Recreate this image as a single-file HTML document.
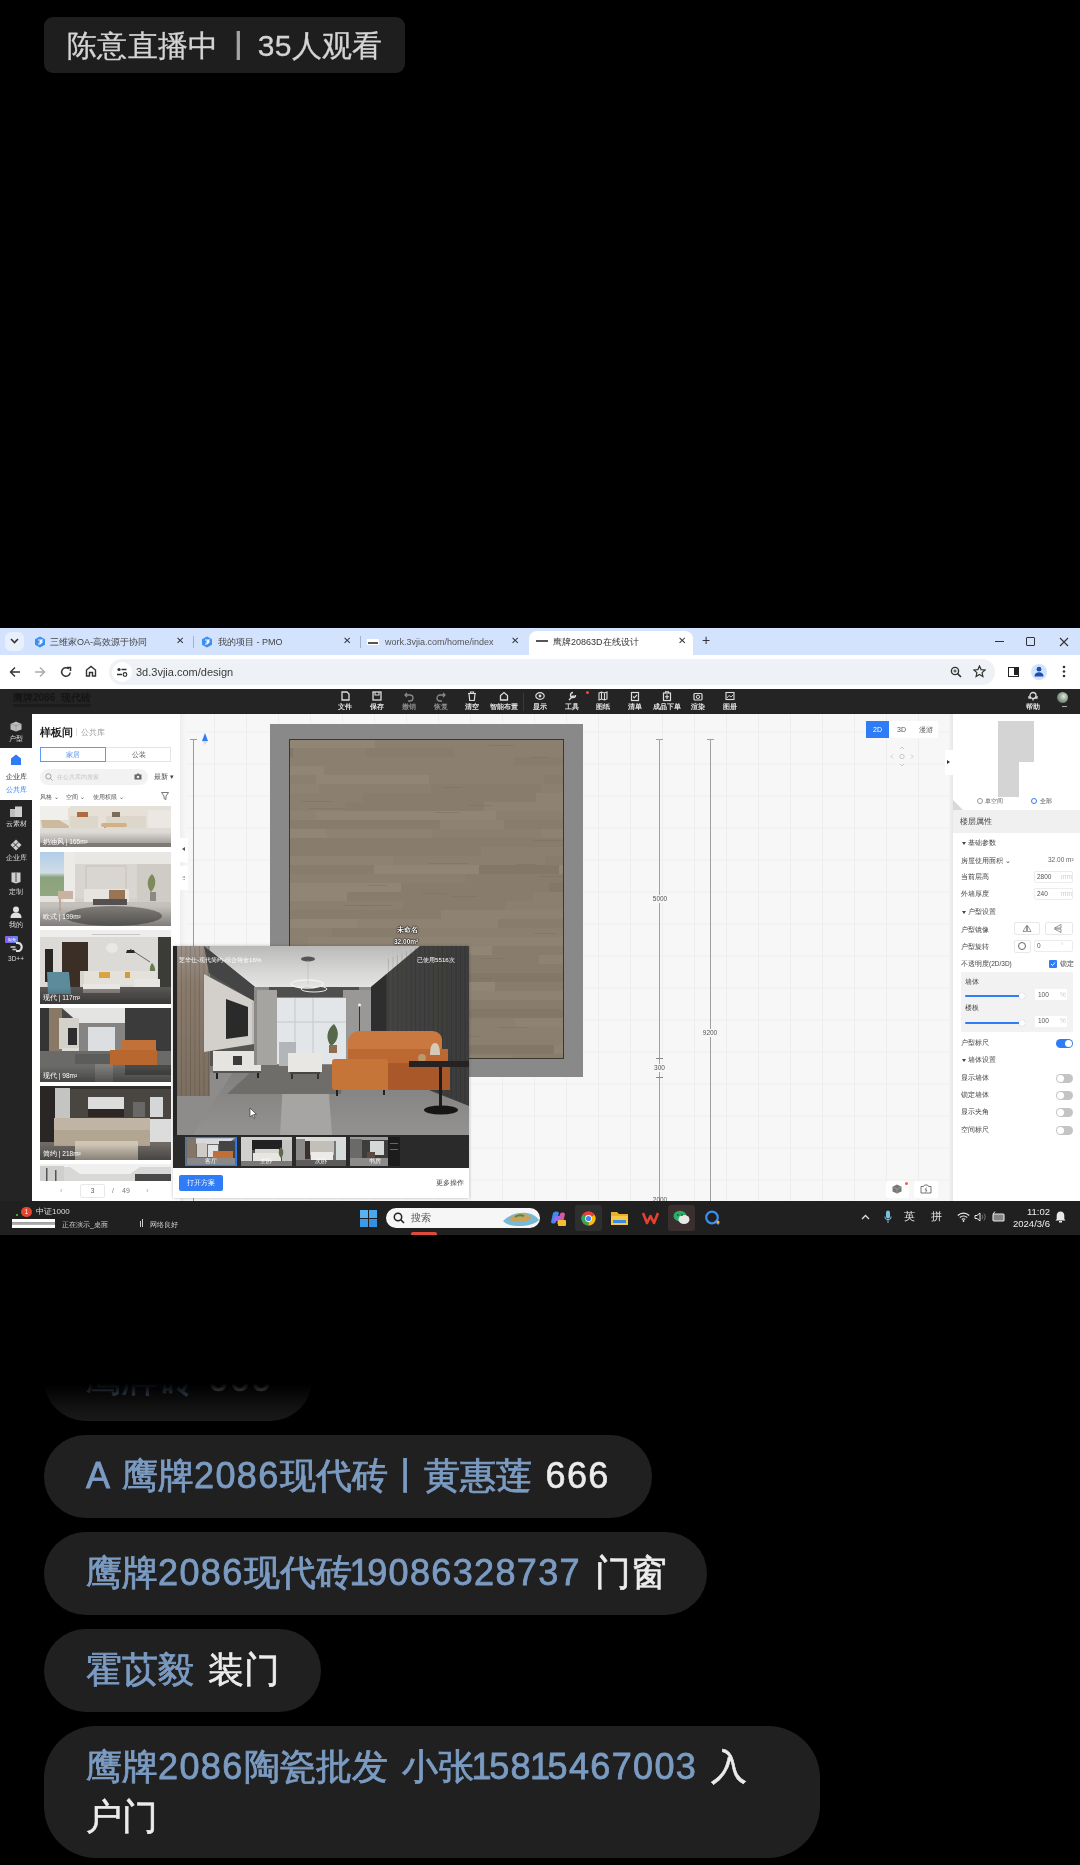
<!DOCTYPE html>
<html><head><meta charset="utf-8">
<style>
*{margin:0;padding:0;box-sizing:border-box}
html,body{width:1080px;height:1865px;background:#000;overflow:hidden;font-family:"Liberation Sans",sans-serif}
.a{position:absolute}
.pill{will-change:transform;left:44px;top:17px;width:361px;height:56px;border-radius:9px;background:#1e1e1e;color:#d4d4d4;font-size:30px;line-height:58px;-webkit-text-stroke:0.3px #d4d4d4;letter-spacing:0.3px;padding-left:23px;white-space:nowrap}
.bub{will-change:transform;position:absolute;left:44px;background:#202020;border-radius:42px;font-size:36px;line-height:50px;white-space:nowrap;padding-left:42px;word-spacing:4px}
.nm{color:#7b9bc2;-webkit-text-stroke:0.8px #7b9bc2}
.ct{color:#ececec;-webkit-text-stroke:0.6px #ececec}
.bub i{font-style:normal;letter-spacing:1.35px}
.bub i.o{letter-spacing:-2.4px;margin-left:-2px}
#shot{left:0;top:0;width:1080px;height:1865px;will-change:transform}
.t9{font-size:9px;line-height:12px;white-space:nowrap}
.x9{font-size:10px;line-height:12px;color:#333}
.tb{position:absolute;top:690px;width:30px;text-align:center;color:#eee;font-size:6.5px;line-height:8px;white-space:nowrap;font-weight:bold}
.tb svg{display:block;margin:1px auto 1px}
.rp{font-size:6.5px;line-height:8px;color:#444;white-space:nowrap}
.rl{left:0;width:32px;text-align:center;font-size:6.5px;line-height:8px;white-space:nowrap}
</style></head>
<body>
<div class="a pill">陈意直播中<span style="color:#a8a8a8;margin:0 4px 0 5px;-webkit-text-stroke:0.8px #a8a8a8">丨</span>35人观看</div>

<div id="shot" class="a">
<!-- ===== browser chrome ===== -->
<div class="a" style="left:0;top:628px;width:1080px;height:27px;background:#d3e3fd"></div>
<div class="a" style="left:5px;top:632px;width:19px;height:19px;border-radius:6px;background:#e9f0fb"></div>
<svg class="a" style="left:10px;top:638px" width="9" height="6" viewBox="0 0 9 6"><path d="M1 1l3.5 3.5L8 1" stroke="#333" stroke-width="1.6" fill="none"/></svg>
<!-- tab1 -->
<svg class="a" style="left:34px;top:636px" width="12" height="12" viewBox="0 0 12 12"><path d="M6 0.5l5 2.8v5.4L6 11.5 1 8.7V3.3z" fill="#3c8ef0"/><path d="M4 4h4l-2 2h2l-2 2H4" stroke="#fff" stroke-width="1.2" fill="none"/></svg>
<div class="a t9" style="left:50px;top:636px;color:#444">三维家OA-高效源于协同</div>
<div class="a x9" style="left:176px;top:635px">✕</div>
<div class="a" style="left:193px;top:636px;width:1px;height:12px;background:#9fb2cf"></div>
<!-- tab2 -->
<svg class="a" style="left:201px;top:636px" width="12" height="12" viewBox="0 0 12 12"><path d="M6 0.5l5 2.8v5.4L6 11.5 1 8.7V3.3z" fill="#3c8ef0"/><path d="M4 4h4l-2 2h2l-2 2H4" stroke="#fff" stroke-width="1.2" fill="none"/></svg>
<div class="a t9" style="left:218px;top:636px;color:#444">我的项目 - PMO</div>
<div class="a x9" style="left:343px;top:635px">✕</div>
<div class="a" style="left:360px;top:636px;width:1px;height:12px;background:#9fb2cf"></div>
<!-- tab3 -->
<div class="a" style="left:367px;top:639px;width:12px;height:6px;background:#fff;border-top:2px solid #fff"><div style="margin:1px 1px;height:2px;background:#555"></div></div>
<div class="a t9" style="left:385px;top:636px;color:#555">work.3vjia.com/home/index</div>
<div class="a x9" style="left:511px;top:635px">✕</div>
<!-- active tab -->
<div class="a" style="left:529px;top:631px;width:164px;height:26px;background:#fff;border-radius:8px 8px 0 0"></div>
<div class="a" style="left:536px;top:640px;width:12px;height:4px"><div style="height:2px;background:#555"></div></div>
<div class="a t9" style="left:553px;top:636px;color:#333">鹰牌20863D在线设计</div>
<div class="a x9" style="left:678px;top:635px">✕</div>
<div class="a" style="left:702px;top:632px;font-size:14px;color:#333;line-height:16px">+</div>
<div class="a" style="left:995px;top:641px;width:9px;height:1px;background:#333"></div>
<div class="a" style="left:1026px;top:637px;width:9px;height:9px;border:1px solid #333;border-radius:1px"></div>
<svg class="a" style="left:1059px;top:637px" width="10" height="10" viewBox="0 0 10 10"><path d="M1 1l8 8M9 1l-8 8" stroke="#333" stroke-width="1.1"/></svg>
<!-- address bar -->
<div class="a" style="left:0;top:655px;width:1080px;height:34px;background:#fff"></div>
<div class="a" style="left:109px;top:659px;width:886px;height:26px;border-radius:13px;background:#eef1f6"></div>
<svg class="a" style="left:9px;top:666px" width="12" height="12" viewBox="0 0 12 12"><path d="M11 6H1.5M6 1.5L1.5 6 6 10.5" stroke="#333" stroke-width="1.4" fill="none"/></svg>
<svg class="a" style="left:34px;top:666px" width="12" height="12" viewBox="0 0 12 12"><path d="M1 6h9.5M6 1.5L10.5 6 6 10.5" stroke="#aaa" stroke-width="1.4" fill="none"/></svg>
<svg class="a" style="left:60px;top:666px" width="12" height="12" viewBox="0 0 12 12"><path d="M10.2 6.5A4.3 4.3 0 1 1 8.8 2.8" stroke="#333" stroke-width="1.5" fill="none"/><path d="M7 1.5h3.5V5" stroke="#333" stroke-width="1.5" fill="none"/></svg>
<svg class="a" style="left:85px;top:665px" width="12" height="12" viewBox="0 0 12 12"><path d="M1.5 11V5L6 1.5 10.5 5V11H7.5V7.5h-3V11z" stroke="#333" stroke-width="1.4" fill="none"/></svg>
<div class="a" style="left:112px;top:662px;width:20px;height:20px;border-radius:10px;background:#fff"></div>
<svg class="a" style="left:116px;top:666px" width="12" height="12" viewBox="0 0 12 12"><circle cx="3" cy="3.5" r="1.6" fill="#333"/><path d="M5.5 3.5h5M1 8.5h5" stroke="#333" stroke-width="1.4"/><circle cx="9" cy="8.5" r="1.8" stroke="#333" stroke-width="1.2" fill="none"/></svg>
<div class="a" style="left:136px;top:665px;font-size:11px;color:#3a3a3a;line-height:14px">3d.3vjia.com/design</div>
<svg class="a" style="left:950px;top:666px" width="12" height="12" viewBox="0 0 12 12"><circle cx="5" cy="5" r="3.6" stroke="#333" stroke-width="1.4" fill="none"/><path d="M7.6 7.6L11 11" stroke="#333" stroke-width="1.6"/><path d="M3.5 5h3M5 3.5v3" stroke="#333" stroke-width="1"/></svg>
<svg class="a" style="left:973px;top:665px" width="13" height="13" viewBox="0 0 13 13"><path d="M6.5 1l1.6 3.6 3.9.4-2.9 2.6.8 3.9-3.4-2-3.4 2 .8-3.9L1 5l3.9-.4z" stroke="#333" stroke-width="1.2" fill="none"/></svg>
<div class="a" style="left:1008px;top:667px;width:11px;height:10px;border:1.5px solid #222"><div style="position:absolute;right:0;top:0;width:4px;height:7px;background:#222"></div></div>
<div class="a" style="left:1031px;top:664px;width:16px;height:16px;border-radius:8px;background:#d3e3fd"></div>
<svg class="a" style="left:1034px;top:666px" width="10" height="11" viewBox="0 0 10 11"><circle cx="5" cy="3.2" r="2.4" fill="#1a4fb8"/><path d="M0.5 10.5c0-3 2-4.3 4.5-4.3s4.5 1.3 4.5 4.3z" fill="#1a4fb8"/></svg>
<svg class="a" style="left:1062px;top:665px" width="4" height="13" viewBox="0 0 4 13"><circle cx="2" cy="2" r="1.3" fill="#333"/><circle cx="2" cy="6.5" r="1.3" fill="#333"/><circle cx="2" cy="11" r="1.3" fill="#333"/></svg>

<!-- ===== app toolbar ===== -->
<div class="a" style="left:0;top:689px;width:1080px;height:25px;background:#242424"></div>
<div class="a" style="left:13px;top:692px;font-size:10px;color:#151515;line-height:11px;font-weight:bold">鹰牌2086 &nbsp;现代砖</div>
<div class="a" style="left:13px;top:704px;width:78px;height:3px;background:#1c1c1c"></div>
<div class="tb" style="left:330px;color:#e6e6e6"><svg width="10" height="11" viewBox="0 0 10 11"><path d="M2 1h5l2 2v6H2z" stroke="#ddd" stroke-width="1.3" fill="none"/></svg>文件</div>
<div class="tb" style="left:362px;color:#e6e6e6"><svg width="10" height="11" viewBox="0 0 10 11"><rect x="1" y="1" width="8" height="8" stroke="#ddd" stroke-width="1.3" fill="none"/><path d="M3 1v3h4V1" stroke="#ddd" stroke-width="1.1" fill="none"/></svg>保存</div>
<div class="tb" style="left:394px;color:#8a8a8a"><svg width="10" height="11" viewBox="0 0 10 11"><path d="M3 2L1 4l2 2M1 4h5a3 3 0 0 1 0 6H4" stroke="#888" stroke-width="1.3" fill="none"/></svg>撤销</div>
<div class="tb" style="left:426px;color:#8a8a8a"><svg width="10" height="11" viewBox="0 0 10 11"><path d="M7 2l2 2-2 2M9 4H4a3 3 0 0 0 0 6h2" stroke="#888" stroke-width="1.3" fill="none"/></svg>恢复</div>
<div class="tb" style="left:457px;color:#e6e6e6"><svg width="10" height="11" viewBox="0 0 10 11"><path d="M1 2.5h8M3.5 2.5V1h3v1.5M2 2.5l.7 7h4.6l.7-7" stroke="#ddd" stroke-width="1.2" fill="none"/></svg>清空</div>
<div class="tb" style="left:489px;color:#e6e6e6"><svg width="10" height="11" viewBox="0 0 10 11"><path d="M1.5 9V4.5L5 1.5l3.5 3V9z" stroke="#ddd" stroke-width="1.3" fill="none"/></svg>智能布置</div>
<div class="tb" style="left:525px;color:#e6e6e6"><svg width="10" height="11" viewBox="0 0 10 11"><ellipse cx="5" cy="5" rx="4.2" ry="3.3" stroke="#ddd" stroke-width="1.2" fill="none"/><circle cx="5" cy="5" r="1.4" fill="#ddd"/></svg>显示</div>
<div class="tb" style="left:557px;color:#e6e6e6"><svg width="10" height="11" viewBox="0 0 10 11"><path d="M2 9l4.5-4.5M6 1.5a2.5 2.5 0 1 0 2.5 2.5" stroke="#ddd" stroke-width="1.4" fill="none"/></svg>工具</div>
<div class="tb" style="left:588px;color:#e6e6e6"><svg width="10" height="11" viewBox="0 0 10 11"><path d="M1 2l2.5-1 3 1 2.5-1v7l-2.5 1-3-1L1 9z M3.5 1v7M6.5 2v7" stroke="#ddd" stroke-width="1.1" fill="none"/></svg>图纸</div>
<div class="tb" style="left:620px;color:#e6e6e6"><svg width="10" height="11" viewBox="0 0 10 11"><rect x="1.5" y="1.5" width="7" height="8" stroke="#ddd" stroke-width="1.2" fill="none"/><path d="M3 5.5l1.3 1.3L7 4" stroke="#ddd" stroke-width="1.1" fill="none"/></svg>清单</div>
<div class="tb" style="left:652px;color:#e6e6e6"><svg width="10" height="11" viewBox="0 0 10 11"><rect x="1.5" y="2" width="7" height="7.5" stroke="#ddd" stroke-width="1.2" fill="none"/><path d="M5 3.5v4.5M3 5.7h4M3.5 2V0.8h3V2" stroke="#ddd" stroke-width="1.1" fill="none"/></svg>成品下单</div>
<div class="tb" style="left:683px;color:#e6e6e6"><svg width="10" height="11" viewBox="0 0 10 11"><rect x="1" y="2.5" width="8" height="6.5" rx="1" stroke="#ddd" stroke-width="1.2" fill="none"/><circle cx="5" cy="5.8" r="1.7" stroke="#ddd" stroke-width="1" fill="none"/></svg>渲染</div>
<div class="tb" style="left:715px;color:#e6e6e6"><svg width="10" height="11" viewBox="0 0 10 11"><rect x="1" y="1.5" width="8" height="7" stroke="#ddd" stroke-width="1.1" fill="none"/><path d="M2 7l2-2.5 2 1.5 2.5-2.5" stroke="#ddd" stroke-width="0.9" fill="none"/></svg>图册</div>
<div class="tb" style="left:1018px;color:#e6e6e6"><svg width="10" height="11" viewBox="0 0 10 11"><circle cx="5" cy="4.5" r="3" stroke="#ddd" stroke-width="1.3" fill="none"/><path d="M1 5v2h2M9 5v2H7M5 7.5v2" stroke="#ddd" stroke-width="1.3" fill="none"/></svg>帮助</div>
<div class="a" style="left:1057px;top:692px;width:11px;height:11px;border-radius:6px;background:radial-gradient(circle at 60% 40%,#dfe8dc,#7c8c80 60%,#333)"></div>
<div class="a" style="left:1062px;top:706px;width:5px;height:1px;background:#aaa"></div>
<div class="a" style="left:523px;top:693px;width:1px;height:18px;background:#3a3a3a"></div>
<div class="a" style="left:586px;top:691px;width:3px;height:3px;border-radius:2px;background:#f04a3a"></div>
<!-- app body backgrounds -->
<div class="a" style="left:0;top:714px;width:32px;height:487px;background:#242424"></div>
<div class="a" style="left:32px;top:714px;width:148px;height:487px;background:#fff"></div>
<div class="a" style="left:180px;top:714px;width:773px;height:487px;background:#f7f7f7"></div>
<div class="a" style="left:953px;top:714px;width:127px;height:487px;background:#fff"></div>


<!-- ===== canvas ===== -->
<div class="a" style="left:180px;top:714px;width:773px;height:487px;background-color:#f7f7f7;background-image:linear-gradient(90deg,#eeeeee 1px,transparent 1px),linear-gradient(#eeeeee 1px,transparent 1px);background-size:32px 32px;background-position:2px 17.5px"></div>
<div class="a" style="left:180px;top:714px;width:6px;height:487px;background:linear-gradient(90deg,#eee,#f7f7f7)"></div>
<div class="a" style="left:270px;top:724px;width:313px;height:353px;background:#898989"></div>
<svg class="a" style="left:289px;top:739px" width="275" height="320" viewBox="0 0 275 320"><rect width="275" height="320" fill="#8b7f6f"/><rect x="-65" y="0" width="151" height="9" fill="#918575"/><rect x="86" y="0" width="195" height="9" fill="#8b7f6f"/><rect x="-119" y="9" width="123" height="9" fill="#837767"/><rect x="4" y="9" width="73" height="9" fill="#8b7f6f"/><rect x="77" y="9" width="88" height="9" fill="#887c6c"/><rect x="165" y="9" width="180" height="9" fill="#8b7f6f"/><rect x="-97" y="18" width="199" height="9" fill="#8b7f6f"/><rect x="102" y="18" width="123" height="9" fill="#8b7f6f"/><rect x="225" y="18" width="115" height="9" fill="#887c6c"/><rect x="-71" y="27" width="106" height="9" fill="#918575"/><rect x="35" y="27" width="159" height="9" fill="#8b7f6f"/><rect x="194" y="27" width="78" height="9" fill="#8b7f6f"/><rect x="272" y="27" width="173" height="9" fill="#8b7f6f"/><rect x="-33" y="36" width="60" height="9" fill="#8b7f6f"/><rect x="27" y="36" width="113" height="9" fill="#918575"/><rect x="140" y="36" width="115" height="9" fill="#8b7f6f"/><rect x="255" y="36" width="102" height="9" fill="#887c6c"/><rect x="-80" y="45" width="110" height="9" fill="#8e8272"/><rect x="30" y="45" width="112" height="9" fill="#8b7f6f"/><rect x="142" y="45" width="110" height="9" fill="#887c6c"/><rect x="252" y="45" width="136" height="9" fill="#8b7f6f"/><rect x="-92" y="54" width="166" height="9" fill="#8b7f6f"/><rect x="74" y="54" width="97" height="9" fill="#887c6c"/><rect x="171" y="54" width="76" height="9" fill="#887c6c"/><rect x="247" y="54" width="137" height="9" fill="#8e8272"/><rect x="-150" y="63" width="60" height="9" fill="#8e8272"/><rect x="-90" y="63" width="146" height="9" fill="#8b7f6f"/><rect x="56" y="63" width="139" height="9" fill="#887c6c"/><rect x="195" y="63" width="138" height="9" fill="#8e8272"/><rect x="-80" y="72" width="107" height="9" fill="#8e8272"/><rect x="27" y="72" width="180" height="9" fill="#918575"/><rect x="207" y="72" width="105" height="9" fill="#8b7f6f"/><rect x="-65" y="81" width="65" height="9" fill="#918575"/><rect x="0" y="81" width="151" height="9" fill="#887c6c"/><rect x="151" y="81" width="64" height="9" fill="#8e8272"/><rect x="215" y="81" width="167" height="9" fill="#887c6c"/><rect x="-96" y="90" width="62" height="9" fill="#8e8272"/><rect x="-34" y="90" width="71" height="9" fill="#918575"/><rect x="37" y="90" width="106" height="9" fill="#8e8272"/><rect x="143" y="90" width="110" height="9" fill="#8b7f6f"/><rect x="253" y="90" width="122" height="9" fill="#8e8272"/><rect x="-88" y="99" width="191" height="9" fill="#887c6c"/><rect x="103" y="99" width="194" height="9" fill="#887c6c"/><rect x="-118" y="108" width="87" height="9" fill="#8e8272"/><rect x="-31" y="108" width="154" height="9" fill="#887c6c"/><rect x="123" y="108" width="69" height="9" fill="#887c6c"/><rect x="192" y="108" width="83" height="9" fill="#8b7f6f"/><rect x="-87" y="117" width="191" height="9" fill="#8e8272"/><rect x="104" y="117" width="152" height="9" fill="#8b7f6f"/><rect x="256" y="117" width="147" height="9" fill="#887c6c"/><rect x="-139" y="126" width="83" height="9" fill="#887c6c"/><rect x="-56" y="126" width="141" height="9" fill="#887c6c"/><rect x="85" y="126" width="105" height="9" fill="#918575"/><rect x="190" y="126" width="80" height="9" fill="#837767"/><rect x="270" y="126" width="98" height="9" fill="#918575"/><rect x="-79" y="135" width="183" height="9" fill="#8b7f6f"/><rect x="104" y="135" width="72" height="9" fill="#8b7f6f"/><rect x="176" y="135" width="196" height="9" fill="#887c6c"/><rect x="-8" y="144" width="120" height="9" fill="#918575"/><rect x="112" y="144" width="148" height="9" fill="#887c6c"/><rect x="260" y="144" width="176" height="9" fill="#837767"/><rect x="-107" y="153" width="97" height="9" fill="#8b7f6f"/><rect x="-10" y="153" width="68" height="9" fill="#918575"/><rect x="58" y="153" width="186" height="9" fill="#887c6c"/><rect x="244" y="153" width="113" height="9" fill="#8b7f6f"/><rect x="-144" y="162" width="93" height="9" fill="#837767"/><rect x="-51" y="162" width="165" height="9" fill="#8b7f6f"/><rect x="114" y="162" width="103" height="9" fill="#887c6c"/><rect x="217" y="162" width="155" height="9" fill="#8b7f6f"/><rect x="-15" y="171" width="167" height="9" fill="#887c6c"/><rect x="152" y="171" width="96" height="9" fill="#8e8272"/><rect x="248" y="171" width="103" height="9" fill="#8e8272"/><rect x="-116" y="180" width="184" height="9" fill="#918575"/><rect x="68" y="180" width="141" height="9" fill="#8e8272"/><rect x="209" y="180" width="130" height="9" fill="#887c6c"/><rect x="-120" y="189" width="163" height="9" fill="#8b7f6f"/><rect x="43" y="189" width="88" height="9" fill="#887c6c"/><rect x="131" y="189" width="196" height="9" fill="#8b7f6f"/><rect x="-127" y="198" width="146" height="9" fill="#8b7f6f"/><rect x="19" y="198" width="82" height="9" fill="#8e8272"/><rect x="101" y="198" width="129" height="9" fill="#8e8272"/><rect x="230" y="198" width="200" height="9" fill="#8e8272"/><rect x="-92" y="207" width="76" height="9" fill="#918575"/><rect x="-16" y="207" width="151" height="9" fill="#918575"/><rect x="135" y="207" width="68" height="9" fill="#918575"/><rect x="203" y="207" width="138" height="9" fill="#887c6c"/><rect x="-143" y="216" width="131" height="9" fill="#8e8272"/><rect x="-12" y="216" width="127" height="9" fill="#918575"/><rect x="115" y="216" width="135" height="9" fill="#887c6c"/><rect x="250" y="216" width="105" height="9" fill="#8e8272"/><rect x="-2" y="225" width="181" height="9" fill="#8e8272"/><rect x="179" y="225" width="124" height="9" fill="#887c6c"/><rect x="-70" y="234" width="178" height="9" fill="#887c6c"/><rect x="108" y="234" width="188" height="9" fill="#837767"/><rect x="-91" y="243" width="149" height="9" fill="#887c6c"/><rect x="58" y="243" width="148" height="9" fill="#918575"/><rect x="206" y="243" width="164" height="9" fill="#887c6c"/><rect x="-44" y="252" width="175" height="9" fill="#887c6c"/><rect x="131" y="252" width="145" height="9" fill="#8e8272"/><rect x="-36" y="261" width="195" height="9" fill="#8b7f6f"/><rect x="159" y="261" width="110" height="9" fill="#887c6c"/><rect x="269" y="261" width="182" height="9" fill="#887c6c"/><rect x="-20" y="270" width="166" height="9" fill="#8b7f6f"/><rect x="146" y="270" width="192" height="9" fill="#837767"/><rect x="-107" y="279" width="137" height="9" fill="#8e8272"/><rect x="30" y="279" width="129" height="9" fill="#918575"/><rect x="159" y="279" width="67" height="9" fill="#8b7f6f"/><rect x="226" y="279" width="100" height="9" fill="#8e8272"/><rect x="-112" y="288" width="106" height="9" fill="#8b7f6f"/><rect x="-6" y="288" width="106" height="9" fill="#837767"/><rect x="100" y="288" width="70" height="9" fill="#8e8272"/><rect x="170" y="288" width="117" height="9" fill="#8b7f6f"/><rect x="-13" y="297" width="94" height="9" fill="#8b7f6f"/><rect x="81" y="297" width="141" height="9" fill="#8b7f6f"/><rect x="222" y="297" width="183" height="9" fill="#8b7f6f"/><rect x="-140" y="306" width="69" height="9" fill="#887c6c"/><rect x="-71" y="306" width="179" height="9" fill="#887c6c"/><rect x="108" y="306" width="157" height="9" fill="#837767"/><rect x="265" y="306" width="78" height="9" fill="#8e8272"/><rect x="-52" y="315" width="120" height="9" fill="#918575"/><rect x="68" y="315" width="155" height="9" fill="#8b7f6f"/><rect x="223" y="315" width="149" height="9" fill="#887c6c"/><rect x="142" y="209" width="37" height="1" fill="#7c7062" fill-opacity="0.5"/><rect x="58" y="280" width="21" height="1" fill="#7c7062" fill-opacity="0.5"/><rect x="18" y="281" width="29" height="1" fill="#7c7062" fill-opacity="0.5"/><rect x="154" y="48" width="19" height="1" fill="#7c7062" fill-opacity="0.5"/><rect x="173" y="297" width="19" height="1" fill="#7c7062" fill-opacity="0.5"/><rect x="180" y="66" width="23" height="1" fill="#7c7062" fill-opacity="0.5"/><rect x="209" y="288" width="30" height="1" fill="#7c7062" fill-opacity="0.5"/><rect x="189" y="239" width="14" height="1" fill="#7c7062" fill-opacity="0.5"/><rect x="80" y="305" width="22" height="1" fill="#7c7062" fill-opacity="0.5"/><rect x="244" y="101" width="40" height="1" fill="#7c7062" fill-opacity="0.5"/><rect x="68" y="311" width="12" height="1" fill="#7c7062" fill-opacity="0.5"/><rect x="179" y="0" width="22" height="1" fill="#7c7062" fill-opacity="0.5"/><rect x="55" y="166" width="28" height="1" fill="#7c7062" fill-opacity="0.5"/><rect x="72" y="166" width="30" height="1" fill="#7c7062" fill-opacity="0.5"/><rect x="192" y="219" width="23" height="1" fill="#7c7062" fill-opacity="0.5"/><rect x="115" y="252" width="19" height="1" fill="#7c7062" fill-opacity="0.5"/><rect x="245" y="194" width="22" height="1" fill="#7c7062" fill-opacity="0.5"/><rect x="81" y="305" width="29" height="1" fill="#7c7062" fill-opacity="0.5"/><rect x="133" y="154" width="25" height="1" fill="#7c7062" fill-opacity="0.5"/><rect x="128" y="212" width="10" height="1" fill="#7c7062" fill-opacity="0.5"/><rect x="163" y="157" width="25" height="1" fill="#7c7062" fill-opacity="0.5"/><rect x="146" y="73" width="25" height="1" fill="#7c7062" fill-opacity="0.5"/><rect x="12" y="62" width="31" height="1" fill="#7c7062" fill-opacity="0.5"/><rect x="227" y="125" width="19" height="1" fill="#7c7062" fill-opacity="0.5"/><rect x="20" y="69" width="36" height="1" fill="#7c7062" fill-opacity="0.5"/><rect x="200" y="6" width="25" height="1" fill="#7c7062" fill-opacity="0.5"/><rect x="140" y="124" width="39" height="1" fill="#7c7062" fill-opacity="0.5"/><rect x="242" y="18" width="17" height="1" fill="#7c7062" fill-opacity="0.5"/><rect x="250" y="137" width="37" height="1" fill="#7c7062" fill-opacity="0.5"/><rect x="79" y="146" width="19" height="1" fill="#7c7062" fill-opacity="0.5"/><rect x="0.5" y="0.5" width="274" height="319" fill="none" stroke="#3c3630" stroke-width="1"/></svg>
<div class="a" style="left:397px;top:926px;font-size:6.5px;line-height:8px;color:#fff;font-weight:bold;text-shadow:0 0 1px #000,0 0 1px #000,0 0 2px #000;white-space:nowrap">未命名</div>
<div class="a" style="left:394px;top:938px;font-size:6.5px;line-height:8px;color:#fff;font-weight:bold;text-shadow:0 0 1px #000,0 0 1px #000,0 0 2px #000;white-space:nowrap">32.00m²</div>
<!-- dimension lines -->
<div class="a" style="left:193px;top:739px;width:1px;height:462px;background:#9a9a9a"></div>
<div class="a" style="left:190px;top:739px;width:7px;height:1px;background:#9a9a9a"></div>
<svg class="a" style="left:201px;top:733px" width="8" height="13" viewBox="0 0 8 13"><path d="M4 0L7 8H1z" fill="#2f7cf6"/><path d="M1 8h6L4 12z" fill="#ddd"/></svg>
<div class="a" style="left:659px;top:739px;width:1px;height:462px;background:#a0a0a0"></div>
<div class="a" style="left:656px;top:739px;width:7px;height:1px;background:#a0a0a0"></div>
<div class="a" style="left:656px;top:1058px;width:7px;height:1px;background:#888"></div>
<div class="a" style="left:656px;top:1077px;width:7px;height:1px;background:#888"></div>
<div class="a" style="left:710px;top:739px;width:1px;height:462px;background:#a0a0a0"></div>
<div class="a" style="left:707px;top:739px;width:7px;height:1px;background:#a0a0a0"></div>
<div class="a" style="left:650px;top:895px;width:20px;height:8px;background:#f7f7f7;font-size:6.5px;line-height:8px;color:#555;text-align:center">5000</div>
<div class="a" style="left:700px;top:1029px;width:20px;height:8px;background:#f7f7f7;font-size:6.5px;line-height:8px;color:#555;text-align:center">9200</div>
<div class="a" style="left:651px;top:1064px;width:17px;height:8px;background:#f7f7f7;font-size:6.5px;line-height:8px;color:#555;text-align:center">300</div>
<div class="a" style="left:650px;top:1196px;width:20px;height:5px;overflow:hidden;font-size:6.5px;line-height:8px;color:#555;text-align:center">2000</div>
<!-- 2D/3D -->
<div class="a" style="left:866px;top:721px;width:72px;height:17px;background:#fff"></div>
<div class="a" style="left:866px;top:721px;width:23px;height:17px;background:#2f7cf6;color:#fff;font-size:7px;line-height:17px;text-align:center">2D</div>
<div class="a" style="left:890px;top:721px;width:23px;height:17px;color:#555;font-size:7px;line-height:17px;text-align:center">3D</div>
<div class="a" style="left:914px;top:721px;width:23px;height:17px;color:#555;font-size:6.5px;line-height:17px;text-align:center">漫游</div>
<svg class="a" style="left:889px;top:746px" width="26" height="21" viewBox="0 0 26 21" fill="none" stroke="#bbb" stroke-width="0.8"><path d="M11 3l2-2 2 2M11 18l2 2 2-2M4 8.5l-2 2 2 2M22 8.5l2 2-2 2"/><circle cx="13" cy="10.5" r="2.2"/></svg>
<!-- bottom canvas buttons -->
<div class="a" style="left:886px;top:1181px;width:23px;height:17px;background:#fff;border-radius:2px"></div>
<svg class="a" style="left:892px;top:1184px" width="10" height="10" viewBox="0 0 10 10"><path d="M5 0.5l4.5 2.3v4.6L5 9.5 0.5 7.4V2.8z" fill="#777"/><path d="M0.5 2.8L5 5l4.5-2.2M5 5v4.5" stroke="#aaa" stroke-width="0.6" fill="none"/></svg>
<div class="a" style="left:905px;top:1182px;width:3px;height:3px;border-radius:2px;background:#f06050"></div>
<div class="a" style="left:914px;top:1181px;width:24px;height:17px;background:#fff;border-radius:2px"></div>
<svg class="a" style="left:920px;top:1184px" width="12" height="10" viewBox="0 0 12 10"><path d="M1 2.5h2.5l1-1.5h3l1 1.5H11V9H1z" stroke="#666" stroke-width="0.9" fill="none"/><path d="M6.5 3.5L5 6h2l-1.5 2.5" stroke="#666" stroke-width="0.8" fill="none"/></svg>

<!-- ===== left rail ===== -->
<div class="a" style="left:0;top:748px;width:32px;height:52px;background:#fff"></div>
<svg class="a" style="left:10px;top:721px" width="12" height="11" viewBox="0 0 12 11"><path d="M6 0.5l5.5 2.5v5.5L6 10.5 0.5 8.5V3z" fill="#bdbdbd"/><path d="M6 3v7.5M0.5 3L6 5l5.5-2" stroke="#888" stroke-width="0.5" fill="none"/></svg>
<div class="a rl" style="top:735px;color:#ddd">户型</div>
<svg class="a" style="left:10px;top:754px" width="12" height="11" viewBox="0 0 12 11"><path d="M1 11V4.5L6 0.5l5 4V11z" fill="#2f7cf6"/></svg>
<div class="a rl" style="top:773px;color:#333">企业库</div>
<div class="a rl" style="top:786px;color:#2f7cf6">公共库</div>
<svg class="a" style="left:9px;top:806px" width="14" height="11" viewBox="0 0 14 11"><rect x="1" y="3" width="7" height="8" fill="#bdbdbd"/><rect x="6" y="0.5" width="7" height="10.5" fill="#d0d0d0"/></svg>
<div class="a rl" style="top:820px;color:#ddd">云素材</div>
<svg class="a" style="left:10px;top:839px" width="12" height="12" viewBox="0 0 12 12"><path d="M6 0.5L11.5 6 6 11.5 0.5 6z" fill="#cfcfcf"/><path d="M3 3.5l5.5 5.5M8.5 3L3 8.5" stroke="#242424" stroke-width="0.9"/></svg>
<div class="a rl" style="top:854px;color:#ddd">企业库</div>
<svg class="a" style="left:11px;top:872px" width="10" height="12" viewBox="0 0 10 12"><path d="M0.5 0.5h9v9.5L5 11.5 0.5 10z" fill="#cfcfcf"/><path d="M5 1v9" stroke="#242424" stroke-width="0.8"/></svg>
<div class="a rl" style="top:888px;color:#ddd">定制</div>
<svg class="a" style="left:10px;top:906px" width="12" height="12" viewBox="0 0 12 12"><circle cx="6" cy="3.5" r="3" fill="#e0e0e0"/><path d="M0.5 12c0-4 2.5-5.5 5.5-5.5s5.5 1.5 5.5 5.5z" fill="#e0e0e0"/></svg>
<div class="a rl" style="top:921px;color:#ddd">我的</div>
<div class="a" style="left:5px;top:936px;width:13px;height:7px;background:linear-gradient(90deg,#8a5cf0,#5a8ae8);border-radius:1px;font-size:4px;line-height:7px;color:#fff;text-align:center">限免</div>
<svg class="a" style="left:9px;top:942px" width="14" height="10" viewBox="0 0 14 10"><path d="M7 0.8h1.5a4.2 4.2 0 0 1 0 8.4H7" stroke="#e0e0e0" stroke-width="2.2" fill="none"/><path d="M1.5 5h5M3.5 7.5h4" stroke="#cfcfcf" stroke-width="1.3"/></svg>
<div class="a rl" style="top:955px;color:#ddd">3D++</div>

<!-- ===== panel ===== -->
<div class="a" style="left:40px;top:726px;font-size:10.5px;line-height:12px;color:#222;font-weight:bold;white-space:nowrap">样板间</div>
<div class="a" style="left:76px;top:728px;width:1px;height:8px;background:#ddd"></div>
<div class="a" style="left:81px;top:728px;font-size:7.5px;line-height:9px;color:#999;white-space:nowrap">公共库</div>
<div class="a" style="left:40px;top:747px;width:131px;height:15px;border:1px solid #e4e4e4"></div>
<div class="a" style="left:40px;top:747px;width:66px;height:15px;border:1px solid #5a9cf6;font-size:6.5px;line-height:13px;color:#4a8cf0;text-align:center">家居</div>
<div class="a" style="left:106px;top:747px;width:65px;height:15px;font-size:6.5px;line-height:15px;color:#555;text-align:center">公装</div>
<div class="a" style="left:40px;top:769px;width:108px;height:16px;border-radius:8px;background:#f2f2f2"></div>
<svg class="a" style="left:45px;top:773px" width="8" height="8" viewBox="0 0 8 8"><circle cx="3.4" cy="3.4" r="2.6" stroke="#999" stroke-width="0.9" fill="none"/><path d="M5.3 5.3L7.5 7.5" stroke="#999" stroke-width="0.9"/></svg>
<div class="a" style="left:57px;top:773px;font-size:6px;line-height:8px;color:#c4c4c4;white-space:nowrap">在公共库内搜索</div>
<svg class="a" style="left:134px;top:773px" width="8" height="7" viewBox="0 0 8 7"><path d="M0.5 1.5h2l.7-1h1.6l.7 1h2v5h-7z" fill="#666"/><circle cx="4" cy="4" r="1.3" fill="#f2f2f2"/></svg>
<div class="a" style="left:154px;top:773px;font-size:6.5px;line-height:8px;color:#444;white-space:nowrap">最新 ▾</div>
<div class="a" style="left:40px;top:793px;font-size:6px;line-height:8px;color:#555;white-space:nowrap">风格 ⌄</div>
<div class="a" style="left:66px;top:793px;font-size:6px;line-height:8px;color:#555;white-space:nowrap">空间 ⌄</div>
<div class="a" style="left:93px;top:793px;font-size:6px;line-height:8px;color:#555;white-space:nowrap">使用权限 ⌄</div>
<svg class="a" style="left:161px;top:792px" width="8" height="8" viewBox="0 0 8 8"><path d="M0.5 0.5h7L5 4v3.5L3 6.5V4z" stroke="#555" stroke-width="0.8" fill="none"/></svg>
<svg class="a" style="left:40px;top:806px" width="131" height="376" viewBox="0 0 131 376">
<defs>
<linearGradient id="cap" x1="0" y1="0" x2="0" y2="1"><stop offset="0" stop-color="#000" stop-opacity="0"/><stop offset="1" stop-color="#000" stop-opacity="0.35"/></linearGradient>
<linearGradient id="sky" x1="0" y1="0" x2="0" y2="1"><stop offset="0" stop-color="#b0cde8"/><stop offset="0.45" stop-color="#cfdde6"/><stop offset="0.55" stop-color="#8aa27c"/><stop offset="1" stop-color="#93a882"/></linearGradient>
<filter id="cb" x="0" y="0" width="1" height="1"><feGaussianBlur stdDeviation="0.45"/></filter>
</defs>
<g filter="url(#cb)">
<!-- card1 -->
<rect x="0" y="0" width="131" height="41" fill="#e4e0da"/>
<rect x="0" y="0" width="30" height="14" fill="#f0efec"/>
<rect x="28" y="2" width="77" height="20" fill="#e6e0d6"/>
<rect x="30" y="10" width="28" height="12" fill="#ddd6ca"/>
<rect x="66" y="10" width="40" height="12" fill="#ddd6ca"/>
<rect x="37" y="6" width="11" height="5" fill="#b06a40"/>
<rect x="72" y="6" width="8" height="5" fill="#7c6c5c"/>
<path d="M1 14h18l10 6-3 13H4z" fill="#cdb99e"/>
<rect x="61" y="17" width="26" height="4" rx="2" fill="#d4b088"/>
<rect x="64" y="21" width="2" height="5" fill="#c9a27a"/>
<rect x="0" y="22" width="131" height="19" fill="#dedad4"/>
<rect x="108" y="4" width="23" height="18" fill="#ebe8e4"/>
<rect x="0" y="26" width="131" height="15" fill="url(#cap)"/>
<rect x="0" y="37" width="131" height="4" fill="#7c7976"/>
<!-- card2 -->
<g transform="translate(0,46)">
<rect x="0" y="0" width="131" height="74" fill="#d4d1cc"/>
<path d="M0 0h131v12H97L90 14H40L35 12H0z" fill="#e9e7e3"/>
<rect x="0" y="0" width="24" height="46" fill="url(#sky)"/>
<rect x="0" y="44" width="24" height="8" fill="#e4e2de"/>
<rect x="24" y="0" width="11" height="52" fill="#ecebe8"/>
<rect x="35" y="12" width="62" height="34" fill="#d9d6d1"/>
<rect x="46" y="14" width="40" height="24" fill="none" stroke="#c4beb4" stroke-width="0.8"/>
<rect x="97" y="12" width="34" height="38" fill="#cfcbc5"/>
<path d="M112 22c-5 4-6 12-1 18 5-5 6-13 1-18z" fill="#7d8a5c"/>
<rect x="110" y="40" width="6" height="9" fill="#8c8884"/>
<rect x="0" y="50" width="131" height="24" fill="#c4c0bb"/>
<ellipse cx="73" cy="64" rx="49" ry="10" fill="#7f7c78"/>
<rect x="44" y="37" width="45" height="13" fill="#e6e4e0"/>
<rect x="69" y="38" width="16" height="13" fill="#9a7454"/>
<rect x="18" y="39" width="15" height="8" fill="#c9b2a2"/>
<rect x="19" y="47" width="2" height="12" fill="#bfa898"/>
<rect x="53" y="47" width="34" height="6" fill="#565050"/>
<rect x="0" y="54" width="131" height="20" fill="url(#cap)"/>
</g>
<!-- card3 -->
<g transform="translate(0,124)">
<rect x="0" y="0" width="131" height="74" fill="#dcdad6"/>
<rect x="0" y="0" width="131" height="7" fill="#eeedeb"/>
<rect x="52" y="4" width="48" height="1" fill="#c8c8c6"/>
<rect x="5" y="19" width="8" height="33" fill="#2c2624"/>
<rect x="22" y="12" width="26" height="45" fill="#3b2f28"/>
<rect x="118" y="7" width="13" height="50" fill="#3a3a38"/>
<ellipse cx="72" cy="18" rx="6" ry="5" fill="#e8e8e6"/>
<path d="M90 19l20 13" stroke="#333" stroke-width="0.7"/>
<path d="M87 20h7l1 3h-9z" fill="#2c2c2c"/>
<path d="M112 33c-3 4-3 10 1 14 3-4 3-10-1-14z" fill="#6a7a50"/>
<rect x="40" y="41" width="76" height="14" fill="#e4e0da"/>
<rect x="40" y="41" width="4" height="16" fill="#d8d4ce"/>
<rect x="59" y="42" width="11" height="6" fill="#d9a442"/>
<rect x="85" y="42" width="5" height="6" fill="#d29a3a"/>
<rect x="94" y="49" width="26" height="9" fill="#e8e6e2"/>
<rect x="0" y="57" width="131" height="17" fill="#585654"/>
<path d="M7 42h22l2 22H8z" fill="#5b8b9b"/>
<rect x="43" y="54" width="37" height="5" fill="#e9e7e3"/>
<rect x="43" y="59" width="37" height="4" fill="#8a8580"/>
<rect x="0" y="58" width="131" height="16" fill="url(#cap)"/>
</g>
<!-- card4 -->
<g transform="translate(0,202)">
<rect x="0" y="0" width="131" height="74" fill="#474746"/>
<path d="M22 0H104L85 15H39z" fill="#e4e4e2"/>
<rect x="0" y="0" width="9" height="57" fill="#363636"/>
<rect x="9" y="0" width="13" height="57" fill="#8a7866"/>
<rect x="19" y="10" width="20" height="31" fill="#d4d0ca"/>
<rect x="28" y="20" width="9" height="17" fill="#2e2e2e"/>
<rect x="22" y="40" width="19" height="8" fill="#dedcd9"/>
<rect x="39" y="15" width="46" height="28" fill="#858482"/>
<rect x="48" y="19" width="27" height="24" fill="#dcdfe1"/>
<rect x="85" y="0" width="46" height="65" fill="#3b3b3b"/>
<rect x="82" y="32" width="34" height="12" fill="#c27238"/>
<rect x="70" y="42" width="47" height="15" fill="#b8672f"/>
<rect x="0" y="43" width="131" height="31" fill="#6a6a68"/>
<rect x="35" y="46" width="40" height="10" fill="#5c5c5a"/>
<rect x="55" y="56" width="18" height="18" fill="#7f7e7c"/>
<rect x="70" y="42" width="47" height="15" fill="#b8672f"/>
<rect x="82" y="32" width="34" height="10" fill="#c27238"/>
<ellipse cx="110" cy="62" rx="7" ry="2" fill="#222"/>
<rect x="85" y="57" width="46" height="10" fill="#4a4a48"/>
<rect x="0" y="58" width="131" height="16" fill="url(#cap)"/>
</g>
<!-- card5 -->
<g transform="translate(0,280)">
<rect x="0" y="0" width="131" height="74" fill="#4a4440"/>
<rect x="0" y="0" width="131" height="3" fill="#322e2b"/>
<rect x="0" y="0" width="15" height="58" fill="#2a2826"/>
<rect x="15" y="2" width="15" height="30" fill="#c4c4c2"/>
<rect x="48" y="11" width="36" height="12" fill="#dcdcdc"/>
<rect x="48" y="23" width="36" height="8" fill="#2e2824"/>
<rect x="93" y="16" width="12" height="15" fill="#6a6866"/>
<rect x="110" y="11" width="13" height="20" fill="#d4d6d8"/>
<rect x="105" y="33" width="26" height="25" fill="#dcdcdc"/>
<rect x="0" y="56" width="131" height="18" fill="#6e6a66"/>
<rect x="14" y="32" width="96" height="16" fill="#c0b5a4"/>
<rect x="14" y="44" width="96" height="16" fill="#b2a592"/>
<rect x="35" y="55" width="63" height="19" fill="#d0c6b6"/>
<rect x="0" y="58" width="131" height="16" fill="url(#cap)"/>
</g>
<!-- card6 -->
<g transform="translate(0,358)">
<rect x="0" y="0" width="131" height="17" fill="#d8d8d6"/>
<path d="M0 0h131v3H100L90 10H40L30 3H0z" fill="#f0f0ee"/>
<rect x="0" y="2" width="24" height="15" fill="#cfcfcd"/>
<rect x="6" y="4" width="1.5" height="13" fill="#555"/>
<rect x="15" y="6" width="1.5" height="11" fill="#555"/>
<rect x="95" y="10" width="36" height="7" fill="#4a4a48"/>
</g>
</g>
<!-- captions -->
<g font-size="6.5" fill="#fff" font-family="Liberation Sans, sans-serif">
<text x="3" y="38">奶油风 | 165m²</text>
<text x="3" y="121" transform="translate(0,-8)">欧式 | 199m²</text>
<text x="3" y="194">现代 | 117m²</text>
<text x="3" y="272">现代 | 98m²</text>
<text x="3" y="350">简约 | 218m²</text>
</g>
</svg>
<!-- pagination -->
<div class="a" style="left:60px;top:1186px;font-size:8px;line-height:9px;color:#aaa">&lsaquo;</div>
<div class="a" style="left:80px;top:1184px;width:25px;height:14px;border:1px solid #e8e8e8;border-radius:2px;font-size:6.5px;line-height:12px;text-align:center;color:#555">3</div>
<div class="a" style="left:112px;top:1186px;font-size:7px;line-height:9px;color:#777">/</div>
<div class="a" style="left:122px;top:1186px;font-size:7px;line-height:9px;color:#777">49</div>
<div class="a" style="left:146px;top:1186px;font-size:8px;line-height:9px;color:#aaa">&rsaquo;</div>
<!-- panel collapse tabs -->
<div class="a" style="left:180px;top:838px;width:8px;height:24px;background:#fff"></div>
<div class="a" style="left:182px;top:847px;width:0;height:0;border-right:3px solid #555;border-top:2.5px solid transparent;border-bottom:2.5px solid transparent"></div>
<div class="a" style="left:180px;top:866px;width:8px;height:24px;background:#fff"></div>
<div class="a" style="left:182px;top:876px;font-size:5px;line-height:5px;color:#777">⠿</div>


<!-- ===== right panel ===== -->
<div class="a" style="left:949px;top:714px;width:4px;height:487px;background:linear-gradient(90deg,rgba(230,230,230,0),#e6e6e6)"></div>
<div class="a" style="left:945px;top:750px;width:8px;height:25px;background:#fff"></div>
<div class="a" style="left:947px;top:760px;width:0;height:0;border-left:3px solid #333;border-top:2.5px solid transparent;border-bottom:2.5px solid transparent"></div>
<div class="a" style="left:998px;top:721px;width:36px;height:41px;background:#d4d4d4"></div>
<div class="a" style="left:998px;top:761px;width:21px;height:36px;background:#d4d4d4"></div>
<div class="a" style="left:953px;top:800px;width:0;height:0;border-left:10px solid #d8d8d8;border-top:10px solid transparent"></div>
<div class="a" style="left:977px;top:798px;width:6px;height:6px;border-radius:3px;border:0.8px solid #999;background:#fff"></div>
<div class="a rp" style="left:985px;top:797px;font-size:5.5px;color:#666">单空间</div>
<div class="a" style="left:1031px;top:798px;width:6px;height:6px;border-radius:3px;border:1.8px solid #2f7cf6;background:#fff"></div>
<div class="a rp" style="left:1040px;top:797px;font-size:5.5px;color:#444">全部</div>
<div class="a" style="left:953px;top:810px;width:127px;height:23px;background:#f0f0f0"></div>
<div class="a rp" style="left:960px;top:817px;font-size:7.5px;line-height:10px;color:#444">楼层属性</div>
<div class="a" style="left:962px;top:842px;width:0;height:0;border-left:2.5px solid transparent;border-right:2.5px solid transparent;border-top:3px solid #444"></div><div class="a rp" style="left:968px;top:838.5px;font-size:7px;color:#444">基础参数</div><div class="a rp" style="left:961px;top:856.5px">房屋使用面积 ⌄</div><div class="a rp" style="left:1048px;top:856px;color:#666">32.00 m²</div><div class="a rp" style="left:961px;top:873px">当前层高</div><div class="a" style="left:1034px;top:871px;width:39px;height:12px;border:1px solid #ececec;border-radius:2px;background:#fff"></div><div class="a rp" style="left:1037px;top:873.0px;color:#555">2800</div><div class="a rp" style="left:1061px;top:873.0px;color:#ccc">mm</div><div class="a rp" style="left:961px;top:890px">外墙厚度</div><div class="a" style="left:1034px;top:888px;width:39px;height:12px;border:1px solid #ececec;border-radius:2px;background:#fff"></div><div class="a rp" style="left:1037px;top:890.0px;color:#555">240</div><div class="a rp" style="left:1061px;top:890.0px;color:#ccc">mm</div><div class="a" style="left:962px;top:911px;width:0;height:0;border-left:2.5px solid transparent;border-right:2.5px solid transparent;border-top:3px solid #444"></div><div class="a rp" style="left:968px;top:907.5px;font-size:7px;color:#444">户型设置</div><div class="a rp" style="left:961px;top:925.5px">户型镜像</div><div class="a" style="left:1014px;top:922px;width:26px;height:13px;border:1px solid #e8e8e8;border-radius:2px"></div><svg class="a" style="left:1022px;top:925px" width="10" height="7" viewBox="0 0 10 7"><path d="M4.5 0.5L1 6.5h3.5zM5.5 0.5L9 6.5H5.5z" stroke="#555" stroke-width="0.6" fill="none"/></svg><div class="a" style="left:1045px;top:922px;width:28px;height:13px;border:1px solid #e8e8e8;border-radius:2px"></div><svg class="a" style="left:1054px;top:924px" width="10" height="9" viewBox="0 0 10 9"><path d="M0.5 4L7 0.5v3.5zM0.5 5L7 8.5V5z" stroke="#555" stroke-width="0.6" fill="none"/></svg><div class="a rp" style="left:961px;top:943px">户型旋转</div><div class="a" style="left:1014px;top:940px;width:17px;height:13px;border:1px solid #e8e8e8;border-radius:2px"></div><div class="a" style="left:1018px;top:942px;width:8px;height:8px;border:0.8px solid #666;border-radius:4px"></div><div class="a" style="left:1034px;top:940px;width:39px;height:12px;border:1px solid #ececec;border-radius:2px;background:#fff"></div><div class="a rp" style="left:1037px;top:942.0px;color:#555">0</div><div class="a rp" style="left:1061px;top:942.0px;color:#ccc">°</div><div class="a rp" style="left:961px;top:960px">不透明度(2D/3D)</div><div class="a" style="left:1049px;top:960px;width:8px;height:8px;background:#2f7cf6;border-radius:1px"></div><svg class="a" style="left:1050px;top:961px" width="6" height="6" viewBox="0 0 6 6"><path d="M1 3l1.5 1.5L5 1.5" stroke="#fff" stroke-width="0.9" fill="none"/></svg><div class="a rp" style="left:1060px;top:960px">锁定</div><div class="a" style="left:961px;top:972px;width:112px;height:60px;background:#f2f2f2"></div><div class="a rp" style="left:965px;top:977.5px">墙体</div><div class="a" style="left:965px;top:995px;width:55px;height:2px;background:#2f7cf6;border-radius:1px"></div><div class="a" style="left:1019px;top:993px;width:6px;height:6px;border-radius:3px;background:#fff;box-shadow:0 0 1px #aaa"></div><div class="a" style="left:1035px;top:989px;width:32px;height:11px;background:#fff"></div><div class="a rp" style="left:1038px;top:990.5px;color:#555">100</div><div class="a rp" style="left:1060px;top:990.5px;color:#ccc">%</div><div class="a rp" style="left:965px;top:1004px">楼板</div><div class="a" style="left:965px;top:1021.5px;width:55px;height:2px;background:#2f7cf6;border-radius:1px"></div><div class="a" style="left:1019px;top:1019.5px;width:6px;height:6px;border-radius:3px;background:#fff;box-shadow:0 0 1px #aaa"></div><div class="a" style="left:1035px;top:1015.5px;width:32px;height:11px;background:#fff"></div><div class="a rp" style="left:1038px;top:1017px;color:#555">100</div><div class="a rp" style="left:1060px;top:1017px;color:#ccc">%</div><div class="a rp" style="left:961px;top:1039px">户型标尺</div><div class="a" style="left:1056px;top:1039px;width:17px;height:9px;border-radius:5px;background:#2f7cf6"></div><div class="a" style="left:1065px;top:1040px;width:7px;height:7px;border-radius:4px;background:#fff"></div><div class="a" style="left:962px;top:1059px;width:0;height:0;border-left:2.5px solid transparent;border-right:2.5px solid transparent;border-top:3px solid #444"></div><div class="a rp" style="left:968px;top:1055.5px;font-size:7px;color:#444">墙体设置</div><div class="a rp" style="left:961px;top:1073.5px">显示墙体</div><div class="a" style="left:1056px;top:1073.5px;width:17px;height:9px;border-radius:5px;background:#c4c4c4"></div><div class="a" style="left:1057px;top:1074.5px;width:7px;height:7px;border-radius:4px;background:#fff"></div><div class="a rp" style="left:961px;top:1091px">锁定墙体</div><div class="a" style="left:1056px;top:1091px;width:17px;height:9px;border-radius:5px;background:#c4c4c4"></div><div class="a" style="left:1057px;top:1092px;width:7px;height:7px;border-radius:4px;background:#fff"></div><div class="a rp" style="left:961px;top:1108px">显示夹角</div><div class="a" style="left:1056px;top:1108px;width:17px;height:9px;border-radius:5px;background:#c4c4c4"></div><div class="a" style="left:1057px;top:1109px;width:7px;height:7px;border-radius:4px;background:#fff"></div><div class="a rp" style="left:961px;top:1126px">空间标尺</div><div class="a" style="left:1056px;top:1126px;width:17px;height:9px;border-radius:5px;background:#c4c4c4"></div><div class="a" style="left:1057px;top:1127px;width:7px;height:7px;border-radius:4px;background:#fff"></div>

<!-- ===== popup ===== -->
<div class="a" style="left:173px;top:946px;width:296px;height:252px;background:#fff;box-shadow:0 0 3px rgba(0,0,0,0.25)"></div>
<svg class="a" style="left:173px;top:946px" width="296" height="189" viewBox="0 0 296 189">
<defs>
<linearGradient id="ceil" x1="0" y1="0" x2="0" y2="1"><stop offset="0" stop-color="#b9b9b7"/><stop offset="0.6" stop-color="#d6d6d4"/><stop offset="1" stop-color="#e4e4e2"/></linearGradient>
<linearGradient id="flr" x1="0" y1="0" x2="0" y2="1"><stop offset="0" stop-color="#7f7e7c"/><stop offset="1" stop-color="#939290"/></linearGradient>
<linearGradient id="rwall" x1="0" y1="0" x2="1" y2="0"><stop offset="0" stop-color="#2e2e2e"/><stop offset="0.15" stop-color="#2e2e2e"/><stop offset="0.17" stop-color="#444443"/><stop offset="1" stop-color="#3c3c3b"/></linearGradient>
<linearGradient id="wood" x1="0" y1="0" x2="0" y2="1"><stop offset="0" stop-color="#9a9088"/><stop offset="0.25" stop-color="#8a7b6c"/><stop offset="1" stop-color="#7c6e60"/></linearGradient>
<pattern id="slat" width="4.5" height="10" patternUnits="userSpaceOnUse"><rect x="3.5" width="1" height="10" fill="#000" fill-opacity="0.13"/></pattern>
<filter id="bl" x="0" y="0" width="1" height="1"><feGaussianBlur stdDeviation="0.5"/></filter>
</defs>
<g filter="url(#bl)">
<rect width="296" height="189" fill="#555553"/>
<!-- floor -->
<path d="M0 120H296V189H0z" fill="url(#flr)"/>
<path d="M0 150L38 126H60L20 189H0z" fill="#8d8c8a"/>
<path d="M110 135h45l4 54h-52z" fill="#a6a5a3"/>
<path d="M54 148L89 116H172L168 148z" fill="#6e6d6b"/>
<!-- ceiling -->
<path d="M31 0H247L198 41H82z" fill="url(#ceil)"/>
<path d="M82 41H198v3H82z" fill="#d8d8d6"/>
<path d="M198 41L247 0h3L200 42z" fill="#d0a868" fill-opacity="0.8"/>
<!-- left dark edge + wood -->
<rect x="0" y="0" width="4" height="189" fill="#262626"/>
<rect x="4" y="0" width="33" height="150" fill="url(#wood)"/>
<rect x="4" y="0" width="33" height="150" fill="url(#slat)"/>
<!-- left wall upper dark band -->
<path d="M31 0L82 41V56L36 27z" fill="#454544"/>
<!-- TV panel (perspective) -->
<path d="M31 28L81 55V98L31 106z" fill="#d3cfca"/>
<path d="M53 53L75 61V90L53 93z" fill="#2b2b2b"/>
<path d="M81 55v43l-2 0V56z" fill="#bbb"/>
<!-- TV cabinet -->
<rect x="40" y="105" width="48" height="20" fill="#e6e4e0"/>
<rect x="60" y="110" width="9" height="9" fill="#3a3a3a"/>
<rect x="40" y="125" width="48" height="2" fill="#555"/>
<rect x="43" y="127" width="2" height="6" fill="#222"/><rect x="84" y="127" width="2" height="5" fill="#222"/>
<!-- back wall -->
<rect x="81" y="41" width="117" height="78" fill="#8c8a88"/>
<rect x="96" y="41" width="90" height="10" fill="#4f4f4e"/>
<rect x="84" y="44" width="20" height="75" fill="#a6a4a1"/>
<rect x="170" y="44" width="28" height="75" fill="#9a9896"/>
<rect x="104" y="52" width="69" height="66" fill="#e3e6e8"/>
<path d="M122 52v68M140 52v68M104 76h69" stroke="#c4c8ca" stroke-width="1"/>
<rect x="106" y="96" width="17" height="24" fill="#b2b6b8"/>
<path d="M161 78c-7 5-9 15-3 22 8-5 9-15 3-22z" fill="#55684a"/>
<rect x="156" y="99" width="8" height="8" fill="#8a6e50"/>
<rect x="186" y="59" width="1" height="60" fill="#333"/>
<circle cx="186.5" cy="59" r="1.6" fill="#eee"/>
<!-- right dark wall -->
<path d="M247 0H296V160L198 121V41z" fill="url(#rwall)"/>
<path d="M247 0H296V158L214 128V13z" fill="url(#slat)"/>
<!-- coffee table -->
<rect x="115" y="107" width="34" height="19" fill="#e8e7e3"/>
<rect x="117" y="126" width="30" height="2" fill="#444"/>
<rect x="118" y="128" width="2" height="5" fill="#333"/><rect x="144" y="128" width="2" height="5" fill="#333"/>
<!-- orange sofa -->
<path d="M175 94c2-6 6-9 12-9h72c6 0 10 4 10 9v10H175z" fill="#c9783f"/>
<rect x="175" y="103" width="100" height="20" fill="#bb6830"/>
<rect x="159" y="113" width="56" height="31" rx="3" fill="#c67438"/>
<rect x="215" y="117" width="62" height="27" fill="#a9592a"/>
<rect x="163" y="144" width="2" height="6" fill="#222"/>
<rect x="210" y="144" width="2" height="5" fill="#222"/>
<path d="M262 97c4 0 5 6 5 12h-10c0-6 1-12 5-12z" fill="#d4cab8"/>
<circle cx="249" cy="112" r="4" fill="#b89a6a"/>
<!-- side table -->
<rect x="236" y="115" width="60" height="6" fill="#262220"/>
<rect x="266" y="121" width="3" height="40" fill="#1e1e1e"/>
<ellipse cx="268" cy="164" rx="17" ry="4.5" fill="#181818"/>
<!-- lamp ring -->
<ellipse cx="134" cy="38" rx="16" ry="4" stroke="#f2f2f2" stroke-width="1.4" fill="none"/>
<ellipse cx="141" cy="43" rx="13" ry="3" stroke="#e8e8e8" stroke-width="1" fill="none"/>
<ellipse cx="135" cy="13" rx="7" ry="2.4" fill="#555"/>
<path d="M135 14v24" stroke="#aaa" stroke-width="0.4"/>
</g>
<!-- cursor -->
<path d="M77 162l0 9 2.2-2 1.6 3.4 1.2-.6-1.6-3.2 3-.2z" fill="#fff" stroke="#222" stroke-width="0.6"/>
<g font-size="6.2" fill="#fff" font-family="Liberation Sans, sans-serif">
<text x="6" y="16">芝华仕-现代简约-综合得金16%</text>
<text x="244" y="16">已使用5516次</text>
</g>
</svg>
<!-- thumbs strip -->
<div class="a" style="left:173px;top:1135px;width:296px;height:33px;background:#2a2a2a"></div>
<svg class="a" style="left:185px;top:1137px" width="216" height="29" viewBox="0 0 216 29">
<g>
<rect x="0" y="0" width="52" height="29" fill="#6a6a68"/>
<path d="M2 1h48l-8 6H12z" fill="#d9d9d7"/>
<rect x="2" y="1" width="9" height="22" fill="#857564"/>
<rect x="12" y="6" width="10" height="14" fill="#cfcbc6"/>
<rect x="23" y="8" width="10" height="12" fill="#e0e3e5"/>
<rect x="34" y="4" width="16" height="18" fill="#444"/>
<rect x="28" y="14" width="20" height="8" fill="#c06f38"/>
<rect x="2" y="21" width="48" height="7" fill="#8a8987"/>
<rect x="0.6" y="0.6" width="50.8" height="27.8" fill="none" stroke="#2f7cf6" stroke-width="1.2"/>
</g>
<g transform="translate(56,0)">
<rect x="0" y="0" width="51" height="29" fill="#4e4e4c"/>
<rect x="0" y="0" width="51" height="3" fill="#cfcfcd"/>
<rect x="0" y="0" width="11" height="29" fill="#d0d0ce"/>
<rect x="11" y="3" width="30" height="10" fill="#222"/>
<rect x="14" y="12" width="24" height="5" fill="#d8d6d2"/>
<rect x="12" y="16" width="28" height="8" fill="#e8e6e2"/>
<rect x="41" y="3" width="10" height="24" fill="#c4c4c2"/>
<path d="M40 10c-3 3-3 8 0 11 3-3 3-8 0-11z" fill="#5a6a4a"/>
<rect x="0" y="24" width="51" height="5" fill="#7a7876"/>
</g>
<g transform="translate(111,0)">
<rect x="0" y="0" width="50" height="29" fill="#77757a"/>
<rect x="0" y="0" width="50" height="4" fill="#dcdcda"/>
<rect x="0" y="2" width="9" height="27" fill="#8c8a88"/>
<rect x="9" y="4" width="5" height="18" fill="#3a3030"/>
<rect x="14" y="4" width="24" height="14" fill="#c2beb8"/>
<rect x="15" y="15" width="22" height="10" fill="#ecebe8"/>
<rect x="40" y="4" width="10" height="20" fill="#d6dcdc"/>
<rect x="0" y="23" width="50" height="6" fill="#5e5c5a"/>
</g>
<g transform="translate(165,0)">
<rect x="0" y="0" width="50" height="29" fill="#3e3d3b"/>
<rect x="0" y="0" width="50" height="3" fill="#9a9a98"/>
<rect x="0" y="2" width="12" height="20" fill="#6a6a68"/>
<rect x="20" y="4" width="14" height="14" fill="#d4d8d6"/>
<rect x="38" y="0" width="12" height="29" fill="#1c1c1c"/>
<rect x="40" y="6" width="8" height="1" fill="#666"/><rect x="40" y="12" width="8" height="1" fill="#666"/>
<rect x="17" y="15" width="8" height="7" fill="#5a4a40"/>
<rect x="0" y="21" width="38" height="8" fill="#8c8b89"/>
</g>
<g font-size="5.5" fill="#fff" font-family="Liberation Sans, sans-serif" text-anchor="middle">
<text x="26" y="26">客厅</text><text x="81" y="26">主卧</text><text x="136" y="26">次卧</text><text x="190" y="26">书房</text>
</g>
</svg>
<div class="a" style="left:179px;top:1175px;width:44px;height:16px;background:#2f7cf6;border-radius:2px;color:#fff;font-size:6.5px;line-height:16px;text-align:center">打开方案</div>
<div class="a rp" style="left:436px;top:1179px;color:#444">更多操作</div>
<!-- taskbar -->
<div class="a" style="left:0;top:1201px;width:1080px;height:34px;background:#202020"></div>

<div class="a" style="left:21px;top:1207px;width:11px;height:10px;border-radius:6px;background:#e2462e;color:#fff;font-size:6.5px;line-height:10px;text-align:center">1</div>
<div class="a" style="left:16px;top:1214px;width:2px;height:2px;background:#3a3"></div>
<div class="a" style="left:36px;top:1207px;font-size:8px;line-height:10px;color:#ddd;white-space:nowrap">中证1000</div>
<div class="a" style="left:12px;top:1219px;width:43px;height:9px;background:linear-gradient(#fff 0,#fff 30%,#999 30%,#bbb 70%,#fff 70%)"></div>
<div class="a" style="left:62px;top:1220px;font-size:7px;line-height:9px;color:#cfcfcf;white-space:nowrap">正在演示_桌面</div>
<div class="a" style="left:140px;top:1221px;width:1px;height:6px;background:#ccc"></div>
<div class="a" style="left:142px;top:1219px;width:1px;height:8px;background:#ccc"></div>
<div class="a" style="left:150px;top:1220px;font-size:7px;line-height:9px;color:#cfcfcf;white-space:nowrap">网络良好</div>
<!-- windows -->
<svg class="a" style="left:360px;top:1210px" width="17" height="17" viewBox="0 0 17 17"><rect x="0" y="0" width="8" height="8" fill="#5ab2f0"/><rect x="9" y="0" width="8" height="8" fill="#4aa8ee"/><rect x="0" y="9" width="8" height="8" fill="#3d9ae6"/><rect x="9" y="9" width="8" height="8" fill="#3590e0"/></svg>
<div class="a" style="left:386px;top:1208px;width:154px;height:20px;border-radius:10px;background:#f6f6f6"></div>
<svg class="a" style="left:393px;top:1212px" width="12" height="12" viewBox="0 0 12 12"><circle cx="5" cy="5" r="3.7" stroke="#222" stroke-width="1.5" fill="none"/><path d="M7.8 7.8L11 11" stroke="#222" stroke-width="1.6"/></svg>
<div class="a" style="left:411px;top:1211px;font-size:10px;line-height:13px;color:#555">搜索</div>
<svg class="a" style="left:501px;top:1209px" width="39" height="18" viewBox="0 0 39 18"><path d="M2 12c6-6 14-9 24-8 6 1 10 4 12 7-4 4-12 6-20 6-8 0-13-2-16-5z" fill="#7ab8d8"/><path d="M8 10c4-4 10-6 16-5 4 1 6 3 7 5-5 2-10 3-14 3-4 0-7-1-9-3z" fill="#c9a35a"/><path d="M14 8c3-2 6-2 9-1" stroke="#4a8a4a" stroke-width="2" fill="none"/></svg>
<svg class="a" style="left:550px;top:1210px" width="16" height="16" viewBox="0 0 16 16"><path d="M3 3c2-2 5-2 6 0l-3 9c-1 2-4 2-5 0z" fill="#3a8cf0"/><path d="M13 13c-2 2-5 2-6 0l3-9c1-2 4-2 5 0z" fill="#e0559a"/><path d="M5 6h6l-2 5H3z" fill="#9a6af0"/><rect x="8" y="10" width="8" height="6" rx="1" fill="#f0c030"/></svg>
<div class="a" style="left:575px;top:1205px;width:27px;height:26px;background:#2e2e2e;border-radius:3px"></div>
<svg class="a" style="left:581px;top:1211px" width="15" height="15" viewBox="0 0 15 15"><circle cx="7.5" cy="7.5" r="7" fill="#e94235"/><path d="M7.5 7.5L1.4 4a7 7 0 0 1 12.2 0z" fill="#e94235"/><path d="M7.5 7.5L13.6 4A7 7 0 0 1 7.5 14.5z" fill="#fbbc04"/><path d="M7.5 7.5V14.5A7 7 0 0 1 1.4 4z" fill="#34a853"/><circle cx="7.5" cy="7.5" r="3.4" fill="#fff"/><circle cx="7.5" cy="7.5" r="2.6" fill="#4285f4"/></svg>
<svg class="a" style="left:611px;top:1211px" width="17" height="14" viewBox="0 0 17 14"><path d="M0 1h6l2 2h9v11H0z" fill="#e8b12a"/><rect x="0" y="5" width="17" height="9" fill="#f7c843"/><rect x="2" y="9" width="13" height="3" fill="#3a8ce0"/></svg>
<svg class="a" style="left:642px;top:1211px" width="17" height="14" viewBox="0 0 17 14"><path d="M1 2l4 10 3.5-7 3.5 7 4-10" stroke="#e8402e" stroke-width="2.6" fill="none" stroke-linejoin="round"/></svg>
<div class="a" style="left:668px;top:1205px;width:27px;height:26px;background:#3a2f2e;border-radius:3px"></div>
<svg class="a" style="left:673px;top:1210px" width="17" height="15" viewBox="0 0 17 15"><ellipse cx="7" cy="6" rx="6.5" ry="5.3" fill="#2aae67"/><ellipse cx="11" cy="9.5" rx="5.5" ry="4.5" fill="#e8e8e8"/><circle cx="5" cy="5" r="0.9" fill="#1a5a3a"/><circle cx="9" cy="5" r="0.9" fill="#1a5a3a"/></svg>
<svg class="a" style="left:704px;top:1210px" width="17" height="16" viewBox="0 0 17 16"><circle cx="8" cy="7.5" r="5.8" stroke="#3a8ef0" stroke-width="2.2" fill="none"/><path d="M11 11l4 3" stroke="#3a8ef0" stroke-width="2.2"/><circle cx="14" cy="12" r="1.5" fill="#f0b030"/></svg>
<div class="a" style="left:411px;top:1232px;width:26px;height:3px;background:#e04a3a;border-radius:2px 2px 0 0"></div>
<!-- tray -->
<svg class="a" style="left:861px;top:1214px" width="9" height="6" viewBox="0 0 9 6"><path d="M1 5l3.5-3.5L8 5" stroke="#ddd" stroke-width="1.3" fill="none"/></svg>
<svg class="a" style="left:884px;top:1210px" width="8" height="14" viewBox="0 0 8 14"><rect x="2" y="0.5" width="4" height="8" rx="2" fill="#7ac0e0"/><path d="M0.8 6.5a3.2 3.2 0 0 0 6.4 0M4 10v3" stroke="#7ac0e0" stroke-width="1" fill="none"/></svg>
<div class="a" style="left:904px;top:1210px;font-size:10.5px;line-height:13px;color:#e8e8e8">英</div>
<div class="a" style="left:931px;top:1210px;font-size:10.5px;line-height:13px;color:#e8e8e8">拼</div>
<svg class="a" style="left:957px;top:1212px" width="13" height="10" viewBox="0 0 13 10"><path d="M0.8 3.5a8 8 0 0 1 11.4 0M2.8 5.5a5.2 5.2 0 0 1 7.4 0M4.8 7.5a2.4 2.4 0 0 1 3.4 0" stroke="#e8e8e8" stroke-width="1.1" fill="none"/><circle cx="6.5" cy="9" r="0.9" fill="#e8e8e8"/></svg>
<svg class="a" style="left:974px;top:1212px" width="12" height="10" viewBox="0 0 12 10"><path d="M1 3.5h2l3-2.5v8L3 6.5H1z" stroke="#e8e8e8" stroke-width="1" fill="none"/><path d="M8 3a3 3 0 0 1 0 4M9.8 1.5a5 5 0 0 1 0 7" stroke="#888" stroke-width="0.8" fill="none"/></svg>
<svg class="a" style="left:992px;top:1211px" width="13" height="11" viewBox="0 0 13 11"><rect x="1" y="3" width="11" height="7" rx="1" stroke="#e8e8e8" stroke-width="1.1" fill="#e8e8e8" fill-opacity="0.5"/><path d="M1 3l2-2.5" stroke="#e8e8e8" stroke-width="1"/></svg>
<div class="a" style="left:1010px;top:1206px;width:40px;font-size:9.5px;line-height:11px;color:#eee;text-align:right;white-space:nowrap">11:02</div>
<div class="a" style="left:1000px;top:1217.5px;width:50px;font-size:9.5px;line-height:11px;color:#eee;text-align:right;white-space:nowrap">2024/3/6</div>
<svg class="a" style="left:1055px;top:1211px" width="11" height="12" viewBox="0 0 11 12"><path d="M5.5 0.5c-2.5 0-3.8 1.8-3.8 4V8L0.5 9.5h10L9.3 8V4.5c0-2.2-1.3-4-3.8-4z" fill="#e8e8e8"/><rect x="4" y="10" width="3" height="1.5" fill="#e8e8e8"/></svg>

</div>
<!-- chat -->
<div class="bub" style="top:1338px;width:268px;height:83px;line-height:81px;background:#1c1c1c"><span class="nm">鹰牌砖</span> <span class="ct"><i>6</i><i>6</i><i>6</i></span></div>
<div class="a" style="left:0;top:1300px;width:1080px;height:121px;background:linear-gradient(#000 0%,#000 69%,rgba(0,0,0,0.7) 78%,rgba(0,0,0,0.35) 88%,rgba(0,0,0,0.08) 100%)"></div>
<div class="bub" style="top:1435px;width:608px;height:83px;line-height:81px"><span class="nm">A 鹰牌<i>2</i><i>0</i><i>8</i><i>6</i>现代砖丨黄惠莲</span> <span class="ct"><i>6</i><i>6</i><i>6</i></span></div>
<div class="bub" style="top:1532px;width:663px;height:83px;line-height:81px"><span class="nm">鹰牌<i>2</i><i>0</i><i>8</i><i>6</i>现代砖<i class="o">1</i><i>9</i><i>0</i><i>8</i><i>6</i><i>3</i><i>2</i><i>8</i><i>7</i><i>3</i><i>7</i></span> <span class="ct">门窗</span></div>
<div class="bub" style="top:1629px;width:277px;height:83px;line-height:81px"><span class="nm">霍苡毅</span> <span class="ct">装门</span></div>
<div class="bub" style="top:1726px;width:776px;height:132px;border-radius:52px;line-height:50px;padding-top:16px"><span class="nm">鹰牌<i>2</i><i>0</i><i>8</i><i>6</i>陶瓷批发 小张<i class="o">1</i><i>5</i><i>8</i><i class="o">1</i><i>5</i><i>4</i><i>6</i><i>7</i><i>0</i><i>0</i><i>3</i></span> <span class="ct">入<br>户门</span></div>
</body></html>
